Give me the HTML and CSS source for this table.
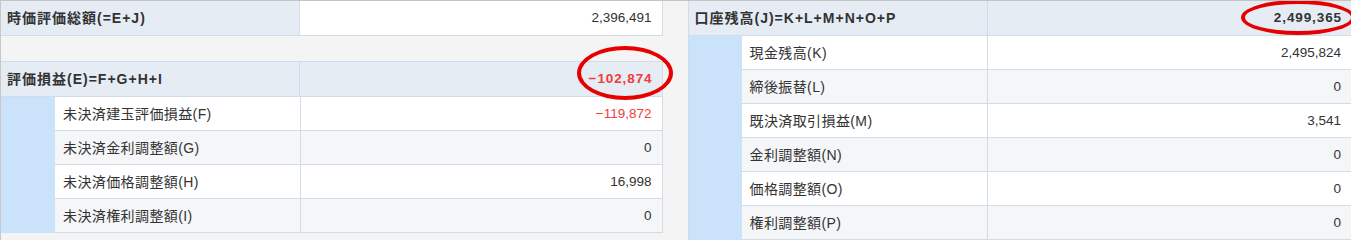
FILE: index.html
```html
<!DOCTYPE html>
<html lang="ja">
<head>
<meta charset="utf-8">
<title>口座残高</title>
<link rel="stylesheet" href="styles.css">
</head>
<body>
<div class="page">
  <div class="col left">
    <div class="tbl">
      <div class="row head">
        <div class="lbl">時価評価総額(=E+J)</div>
        <div class="val">2,396,491</div>
      </div>
    </div>
    <div class="spacer"></div>
    <div class="tbl">
      <div class="row head">
        <div class="lbl">評価損益(E)=F+G+H+I</div>
        <div class="val bold neg">−102,874<span class="circle c1"></span></div>
      </div>
      <div class="body">
        <div class="indent"></div>
        <div class="rows">
          <div class="row sub"><div class="lbl">未決済建玉評価損益(F)</div><div class="val neg">−119,872</div></div>
          <div class="row sub alt"><div class="lbl">未決済金利調整額(G)</div><div class="val">0</div></div>
          <div class="row sub"><div class="lbl">未決済価格調整額(H)</div><div class="val">16,998</div></div>
          <div class="row sub alt"><div class="lbl">未決済権利調整額(I)</div><div class="val">0</div></div>
        </div>
      </div>
    </div>
  </div>
  <div class="col right">
    <div class="tbl">
      <div class="row head">
        <div class="lbl">口座残高(J)=K+L+M+N+O+P</div>
        <div class="val bold">2,499,365<span class="circle c2"></span></div>
      </div>
      <div class="body">
        <div class="indent"></div>
        <div class="rows">
          <div class="row sub"><div class="lbl">現金残高(K)</div><div class="val">2,495,824</div></div>
          <div class="row sub alt"><div class="lbl">締後振替(L)</div><div class="val">0</div></div>
          <div class="row sub"><div class="lbl">既決済取引損益(M)</div><div class="val">3,541</div></div>
          <div class="row sub alt"><div class="lbl">金利調整額(N)</div><div class="val">0</div></div>
          <div class="row sub"><div class="lbl">価格調整額(O)</div><div class="val">0</div></div>
          <div class="row sub alt"><div class="lbl">権利調整額(P)</div><div class="val">0</div></div>
        </div>
      </div>
    </div>
  </div>
</div>
</body>
</html>
```
FILE: styles.css
```css
html, body {
  margin: 0;
  padding: 0;
  background: #f4f4f4;
  overflow: hidden;
}
body {
  width: 1351px;
  height: 240px;
  box-sizing: border-box;
  border-top: 1px solid #c4c4c4;
  border-left: 1px solid #c8c8c8;
  font-family: "Liberation Sans", "Noto Sans CJK JP", sans-serif;
  font-size: 14px;
  color: #333;
}
.page {
  display: flex;
  gap: 25px;
  align-items: flex-start;
}
.col {
  display: flex;
  flex-direction: column;
}
.col.left {
  width: 662px;
}
.col.right {
  width: 664px;
}
.spacer {
  height: 25px;
}
.tbl {
  border-right: 1px solid #d2dce8;
}
.col.right .tbl {
  border-left: 1px solid #d2dce8;
  border-right: none;
}
.left .spacer + .tbl {
  border-top: 1px solid #d2dce8;
}
.row {
  display: flex;
  border-bottom: 1px solid #d2dce8;
}
.row.head {
  height: 34px;
  background: #e5ecf4;
}
.row .lbl {
  display: flex;
  align-items: center;
  border-right: 1px solid #d2dce8;
  line-height: 1;
  letter-spacing: 0.4px;
  white-space: nowrap;
}
.row.head .lbl {
  width: 292px;
  padding-left: 6px;
  font-weight: bold;
  letter-spacing: 1px;
}
.row .val {
  position: relative;
  flex: 1;
  display: flex;
  align-items: center;
  justify-content: flex-end;
  padding-right: 10px;
  font-size: 13.5px;
  line-height: 1;
}
.left .tbl:first-child .row.head .val {
  background: #fff;
}
.body {
  display: flex;
}
.indent {
  width: 54px;
  background: #cbe3fa;
}
.col.right .indent {
  width: 53px;
}
.rows {
  flex: 1;
  display: flex;
  flex-direction: column;
}
.row.sub {
  height: 33px;
  background: #fff;
}
.row.sub.alt {
  background: #f5f6f8;
}
.row.sub .lbl {
  width: 237px;
  padding-left: 8px;
}
.bold {
  font-weight: bold;
  letter-spacing: 0.9px;
}
.row .val.bold {
  padding-right: 9px;
}
.neg {
  color: #f23b3b;
}
.circle {
  position: absolute;
  border: 4px solid #e60000;
  border-radius: 50%;
  box-sizing: border-box;
}
.c1 {
  right: -11px;
  top: -16px;
  width: 96px;
  height: 54px;
}
.c2 {
  right: -4px;
  top: -1px;
  width: 114px;
  height: 35px;
}
```
